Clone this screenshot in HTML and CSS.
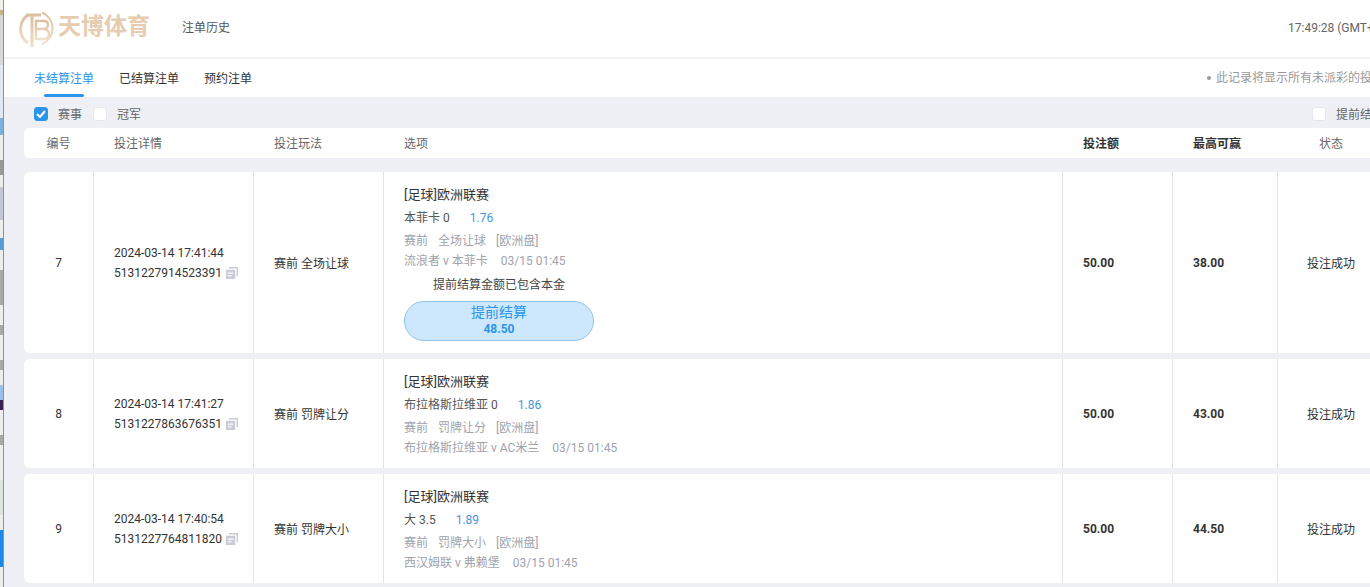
FILE: index.html
```html
<!DOCTYPE html>
<html lang="en">
<head>
    <meta charset="UTF-8">
    <title>注单历史</title>
    <link rel="stylesheet" href="styles.css">
</head>
<body>
    <div class="edge-strip"></div>
    <div class="page">
        <header class="topbar">
            <svg class="logo-mark" width="36" height="38" viewBox="0 0 36 38" fill="none">
                <defs>
                    <linearGradient id="gold" x1="0" y1="0" x2="0" y2="1">
                        <stop offset="0" stop-color="#dcbf9e"/>
                        <stop offset="1" stop-color="#f0dfcb"/>
                    </linearGradient>
                </defs>
                <path d="M9 5 A17 17 0 0 0 9 33" stroke="url(#gold)" stroke-width="3"/>
                <path d="M23 2.500 A17 17 0 0 1 23 34" stroke="url(#gold)" stroke-width="2"/>
                <path d="M7 5 H22 M13 5 V37" stroke="url(#gold)" stroke-width="3"/>
                <path d="M17 11 H25 Q29 11 29 15 Q29 18 25 19 Q30 20 30 24 Q30 29 25 29 H17 Z M17 19 H25" stroke="url(#gold)" stroke-width="2.400"/>
            </svg>
            <span class="logo-text">天博体育</span>
            <span class="top-title">注单历史</span>
            <span class="clock">17:49:28 (GMT+8)</span>
        </header>

        <nav class="tabs">
            <a class="tab active">未结算注单</a>
            <a class="tab">已结算注单</a>
            <a class="tab">预约注单</a>
            <span class="tab-note">此记录将显示所有未派彩的投注</span>
        </nav>

        <main class="content">
            <div class="filters">
                <span class="check checked">
                    <svg width="10" height="8" viewBox="0 0 10 8" fill="none"><path d="M1 4 L4 7 L9 1" stroke="#fff" stroke-width="2"/></svg>
                </span>
                <span class="filter-label">赛事</span>
                <span class="check"></span>
                <span class="filter-label">冠军</span>
                <div class="early">
                    <span class="check"></span>
                    <span class="filter-label">提前结算</span>
                </div>
            </div>

            <div class="row head-row">
                <div class="cell col-no">编号</div>
                <div class="cell col-detail">投注详情</div>
                <div class="cell col-play">投注玩法</div>
                <div class="cell col-option">选项</div>
                <div class="cell col-stake strong">投注额</div>
                <div class="cell col-win strong">最高可赢</div>
                <div class="cell col-status">状态</div>
            </div>

            <div class="row bet-row first">
                <div class="cell col-no">7</div>
                <div class="cell col-detail">
                    <p>2024-03-14 17:41:44</p>
                    <p>5131227914523391 <svg class="copy" width="12" height="12" viewBox="0 0 13 13"><path d="M3 0 H13 V10 H11.500 V1.500 H3 Z" fill="#c9cbd6"/><path d="M0 3 H10 V13 H0 Z M2 6 V7.200 H8 V6 Z M2 9 V10.200 H6 V9 Z" fill="#c9cbd6" fill-rule="evenodd"/></svg></p>
                </div>
                <div class="cell col-play">赛前 全场让球</div>
                <div class="cell col-option">
                    <div class="league">[足球]欧洲联赛</div>
                    <div class="pick">本菲卡 0<span class="odds">1.76</span></div>
                    <div class="meta"><span>赛前</span><span>全场让球</span><span>[欧洲盘]</span></div>
                    <div class="meta">流浪者 v 本菲卡<span class="kickoff">03/15 01:45</span></div>
                    <div class="cashout-note">提前结算金额已包含本金</div>
                    <button class="cashout">提前结算<b>48.50</b></button>
                </div>
                <div class="cell col-stake strong">50.00</div>
                <div class="cell col-win strong">38.00</div>
                <div class="cell col-status">投注成功</div>
            </div>

            <div class="row bet-row">
                <div class="cell col-no">8</div>
                <div class="cell col-detail">
                    <p>2024-03-14 17:41:27</p>
                    <p>5131227863676351 <svg class="copy" width="12" height="12" viewBox="0 0 13 13"><path d="M3 0 H13 V10 H11.500 V1.500 H3 Z" fill="#c9cbd6"/><path d="M0 3 H10 V13 H0 Z M2 6 V7.200 H8 V6 Z M2 9 V10.200 H6 V9 Z" fill="#c9cbd6" fill-rule="evenodd"/></svg></p>
                </div>
                <div class="cell col-play">赛前 罚牌让分</div>
                <div class="cell col-option">
                    <div class="league">[足球]欧洲联赛</div>
                    <div class="pick">布拉格斯拉维亚 0<span class="odds">1.86</span></div>
                    <div class="meta"><span>赛前</span><span>罚牌让分</span><span>[欧洲盘]</span></div>
                    <div class="meta">布拉格斯拉维亚 v AC米兰<span class="kickoff">03/15 01:45</span></div>
                </div>
                <div class="cell col-stake strong">50.00</div>
                <div class="cell col-win strong">43.00</div>
                <div class="cell col-status">投注成功</div>
            </div>

            <div class="row bet-row">
                <div class="cell col-no">9</div>
                <div class="cell col-detail">
                    <p>2024-03-14 17:40:54</p>
                    <p>5131227764811820 <svg class="copy" width="12" height="12" viewBox="0 0 13 13"><path d="M3 0 H13 V10 H11.500 V1.500 H3 Z" fill="#c9cbd6"/><path d="M0 3 H10 V13 H0 Z M2 6 V7.200 H8 V6 Z M2 9 V10.200 H6 V9 Z" fill="#c9cbd6" fill-rule="evenodd"/></svg></p>
                </div>
                <div class="cell col-play">赛前 罚牌大小</div>
                <div class="cell col-option">
                    <div class="league">[足球]欧洲联赛</div>
                    <div class="pick">大 3.5<span class="odds">1.89</span></div>
                    <div class="meta"><span>赛前</span><span>罚牌大小</span><span>[欧洲盘]</span></div>
                    <div class="meta">西汉姆联 v 弗赖堡<span class="kickoff">03/15 01:45</span></div>
                </div>
                <div class="cell col-stake strong">50.00</div>
                <div class="cell col-win strong">44.50</div>
                <div class="cell col-status">投注成功</div>
            </div>
        </main>
    </div>
</body>
</html>
```

FILE: styles.css
```css
html, body {
    margin: 0;
    padding: 0;
    height: 100%;
    overflow: hidden;
}

body {
    display: flex;
    width: 1370px;
    height: 587px;
    font-family: Roboto, "Noto Sans CJK SC", sans-serif;
    font-size: 12px;
    color: #333;
    background: #eff0f5;
}

/* Sliver of the window behind, on the left edge */
.edge-strip {
    flex: 0 0 3px;
    border-right: 1px solid #8e9196;
    background: linear-gradient(to bottom,
        #f2f0ec 0 10px,
        #c8b08a 10px 15px,
        #d9d9d9 15px 65px,
        #e2e8f1 65px 118px,
        #7fb0dc 118px 135px,
        #eeeeee 135px 160px,
        #999999 160px 175px,
        #eeeeee 175px 187px,
        #c4c8d2 187px 220px,
        #eeeeee 220px 238px,
        #5a9bd4 238px 250px,
        #eeeeee 250px 270px,
        #aaaaaa 270px 305px,
        #eeeeee 305px 325px,
        #aaaaaa 325px 335px,
        #eeeeee 335px 360px,
        #aaaaaa 360px 370px,
        #eeeeee 370px 385px,
        #9cc0e4 385px 400px,
        #3a2050 400px 410px,
        #eeeeee 410px 435px,
        #aaaaaa 435px 445px,
        #eeeeee 445px 480px,
        #dde5da 480px 515px,
        #eeeeee 515px 530px,
        #1e88e5 530px 567px,
        #eeeeee 567px);
}

/* The page is wider than the window and runs off on the right */
.page {
    flex: 0 0 1500px;
    display: flex;
    flex-direction: column;
}

/* Header */
.topbar {
    flex: none;
    display: flex;
    align-items: center;
    box-sizing: border-box;
    height: 59px;
    padding-left: 15px;
    background: #fff;
    border-bottom: 2px solid #f2f2f4;
}

.logo-mark {
    flex: none;
    margin-right: 3px;
}

.logo-text {
    flex: none;
    width: 124px;
    margin-bottom: 10px;
    font-size: 23px;
    font-weight: 700;
    color: #e6ccb0;
}

.top-title {
    margin-bottom: 4px;
    color: #555;
}

.clock {
    flex: 0 0 216px;
    margin-left: auto;
    margin-bottom: 2px;
    color: #666;
    white-space: nowrap;
}

/* Tabs */
.tabs {
    flex: none;
    display: flex;
    height: 38px;
    padding-left: 30px;
    background: #fff;
}

.tab {
    position: relative;
    line-height: 40px;
    margin-right: 25px;
    color: #333;
}

.tab.active {
    color: #2b95e9;
}

.tab.active::after {
    content: "";
    position: absolute;
    left: 10px;
    bottom: 0;
    width: 40px;
    height: 3px;
    border-radius: 2px;
    background: #2b95e9;
}

.tab-note {
    flex: 0 0 297px;
    margin-left: auto;
    line-height: 38px;
    color: #999;
    white-space: nowrap;
}

.tab-note::before {
    content: "";
    display: inline-block;
    width: 4px;
    height: 4px;
    margin-right: 5px;
    border-radius: 50%;
    background: #999;
    vertical-align: 2px;
}

/* Filters */
.content {
    padding-left: 20px;
}

.filters {
    display: flex;
    align-items: center;
    box-sizing: border-box;
    height: 31px;
    padding: 3px 0 0 10px;
}

.check {
    flex: none;
    display: flex;
    align-items: center;
    justify-content: center;
    box-sizing: border-box;
    width: 14px;
    height: 14px;
    margin-right: 10px;
    border-radius: 3px;
    background: #fff;
    border: 1px solid #e6e7ec;
}

.check.checked {
    background: #2b95e9;
    border-color: #2b95e9;
}

.filter-label {
    width: 35px;
    padding-bottom: 2px;
    color: #666;
    white-space: nowrap;
}

.early {
    flex: 0 0 192px;
    display: flex;
    align-items: center;
    margin-left: auto;
}

/* Rows */
.row {
    display: flex;
    background: #fff;
    border-radius: 6px;
}

.head-row {
    height: 30px;
    margin-bottom: 14px;
    color: #666;
}

.head-row .cell {
    padding-bottom: 2px;
}

.bet-row {
    height: 109px;
    margin-bottom: 6px;
}

.bet-row.first {
    height: 181px;
}

.cell {
    display: flex;
    flex-direction: column;
    justify-content: center;
    box-sizing: border-box;
    padding-left: 20px;
}

.cell + .cell {
    border-left: 1px solid transparent;
}

.bet-row .cell + .cell {
    border-left-color: #e3e4e9;
}

.col-no {
    width: 69px;
    padding-left: 0;
    align-items: center;
}

.col-detail {
    width: 160px;
}

.col-play {
    width: 130px;
}

.col-option {
    width: 679px;
}

.bet-row .col-option {
    justify-content: flex-start;
    padding-top: 13px;
}

.col-stake {
    width: 110px;
}

.col-win {
    width: 105px;
}

.col-status {
    width: 107px;
    padding-left: 0;
    align-items: center;
}

.strong {
    font-weight: 700;
    color: #333;
}

.col-detail p {
    margin: 0;
    line-height: 20px;
}

.copy {
    margin-left: 1px;
    vertical-align: -2px;
}

/* Option cell */
.league {
    line-height: 20px;
    margin-bottom: 3px;
    font-size: 13px;
    color: #333;
}

.pick {
    line-height: 20px;
    margin-bottom: 3px;
    color: #555;
}

.odds {
    margin-left: 20px;
    color: #4a94de;
}

.meta {
    line-height: 20px;
    color: #a0a3ad;
}

.meta span + span {
    margin-left: 10px;
}

.meta .kickoff {
    margin-left: 13px;
}

.cashout-note {
    width: 190px;
    line-height: 20px;
    margin-top: 4px;
    text-align: center;
    color: #444;
}

.cashout {
    display: flex;
    flex-direction: column;
    align-items: center;
    box-sizing: border-box;
    width: 190px;
    height: 40px;
    margin-top: 6px;
    padding: 1px 0 0;
    border: 1px solid #8fc3ea;
    border-radius: 20px;
    background: #cde8fd;
    font-family: inherit;
    font-size: 14px;
    line-height: 19px;
    color: #2b95e9;
}

.cashout b {
    font-size: 12px;
    line-height: 15px;
}
```
